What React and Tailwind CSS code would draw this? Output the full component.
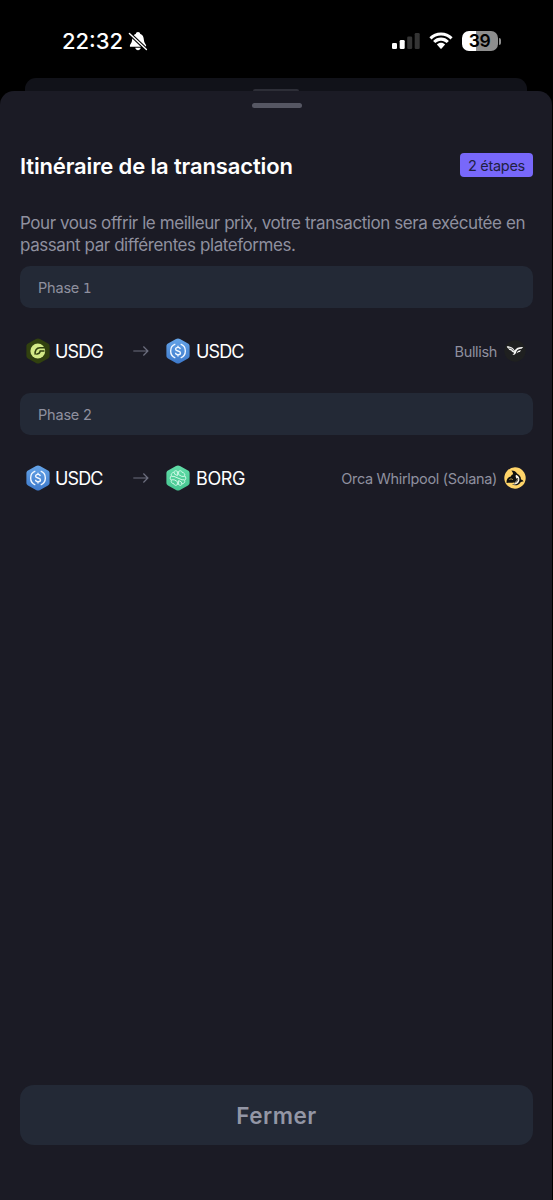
const hex = 'M12 .4 C12.8 .4 13.4 .7 14 1 L22 5.6 C23.2 6.3 23.6 7.1 23.6 8.4 V17.6 C23.6 18.9 23.2 19.7 22 20.4 L14 25 C12.7 25.8 11.3 25.8 10 25 L2 20.4 C.8 19.7 .4 18.9 .4 17.6 V8.4 C.4 7.1 .8 6.3 2 5.6 L10 1 C10.6 .7 11.2 .4 12 .4Z';

function UsdgIcon() {
  return (
    <svg className="h-[26px] w-6 shrink-0" viewBox="0 0 24 26">
      <path d={hex} fill="#31410f" />
      <circle cx="11.8" cy="13" r="7.4" fill="#d3ea86" />
      <path d="M20 9.8 H14 C10.4 9.9 8.6 12.6 9.2 16.6 M18.5 13.1 H14.2 C13.9 15 12.6 16 10.2 16.2" fill="none" stroke="#31410f" strokeWidth="1.5" />
    </svg>
  );
}

function UsdcIcon() {
  return (
    <svg className="h-[26px] w-6 shrink-0" viewBox="0 0 24 26">
      <defs>
        <linearGradient id="usdc" x1="0" y1="0" x2="0" y2="1">
          <stop offset="0" stopColor="#65a4e8" />
          <stop offset="1" stopColor="#3d79cb" />
        </linearGradient>
      </defs>
      <path d={hex} fill="url(#usdc)" />
      <g fill="none" stroke="#f1f7ff" strokeWidth="1.4">
        <path d="M9.3 6.2 A7.3 7.3 0 0 0 9.3 19.8 M14.7 6.2 A7.3 7.3 0 0 1 14.7 19.8" />
        <path d="M14.3 11.1 C14.1 9.8 13.2 9.4 12 9.4 C10.6 9.4 9.6 10.1 9.6 11.2 C9.6 13.7 14.5 12.2 14.5 14.9 C14.5 16 13.4 16.7 12 16.7 C10.6 16.7 9.6 16 9.5 14.8 M12 7.7 V9.5 M12 16.6 V18.4" />
      </g>
    </svg>
  );
}

function BorgIcon() {
  return (
    <svg className="h-[26px] w-6 shrink-0" viewBox="0 0 24 26">
      <defs>
        <linearGradient id="borg" x1="0" y1="0" x2="0" y2="1">
          <stop offset="0" stopColor="#62dda8" />
          <stop offset="1" stopColor="#45c590" />
        </linearGradient>
      </defs>
      <path d={hex} fill="url(#borg)" />
      <g fill="none" stroke="#d5fbe9" strokeWidth=".95" strokeLinecap="round" strokeLinejoin="round">
        <path d="M11.4 6.8 C10.6 5 8.2 5.5 7.8 7.4 C5.5 7.8 4.8 9.4 5.4 10.8 C3.7 12 3.8 14.4 5.3 15.3 C4.8 17.2 6 18.6 7.8 18.7 C8.3 20.6 10.6 21 11.4 19.3" />
        <path d="M12.6 6.8 C13.4 5 15.8 5.5 16.2 7.4 C18.5 7.8 19.2 9.4 18.6 10.8 C20.3 12 20.2 14.4 18.7 15.3 C19.2 17.2 18 18.6 16.2 18.7 C15.7 20.6 13.4 21 12.6 19.3" />
        <path d="M12.6 6.8 V9.6 L15.8 11.4 H18.3 M11.4 6.8 V10.6 L8.6 9.2 V7.8 M12.6 19.3 V15.5 L15.4 17 V18.4 M11.4 19.3 V16.6 L8.2 14.8 H5.6 M5.8 11.4 H8 L16 14.8 H18.3" />
      </g>
    </svg>
  );
}

function BullishIcon() {
  return (
    <svg className="size-[22px] shrink-0" viewBox="0 0 22 22">
      <circle cx="11" cy="11" r="10.7" fill="#1f2020" />
      <path d="M2.8 6.2 C6.6 6.2 9.2 7.4 10.6 10.6 C12.2 7.8 15 6.8 19.2 7 L17.6 8.8 C15 8.7 13.3 9.6 12.4 11.6 C11.9 14 10.6 15.4 8.4 15 C9.6 14.5 10.1 13.6 9.8 12.4 C8.6 12.3 7.6 11.7 7.2 10.6 C5.8 10.3 4.9 9.7 4.6 8.7 C3.6 8.2 3 7.2 2.8 6.2Z" fill="#f5f5f3" />
      <path d="M4.6 8.1 C7.2 8.3 8.8 9.2 9.8 11.2" stroke="#1f2020" strokeWidth=".6" fill="none" />
      <path d="M12.6 13.4 C13.2 11.2 14.4 10.3 17 10.3 L15.9 12 C14.8 12 13.8 12.4 12.6 13.4Z" fill="#f5f5f3" />
    </svg>
  );
}

function OrcaIcon() {
  return (
    <svg className="size-[22px] shrink-0" viewBox="0 0 22 22">
      <circle cx="11" cy="11" r="10.7" fill="#ffd469" />
      <path d="M7.4 3.6 C10.2 3.6 12 4.8 13 6.6 C15.6 8 17 10 17 12.4 C18.4 12.6 19.3 13.4 19.6 14.6 C18.4 14.4 17.4 14.6 16.6 15.2 C15.2 18 11.6 19.2 8 17.6 C9.6 17.4 10.6 16.8 10.8 15.6 C7.6 15.8 5 15.4 2.6 16 C2.2 12.6 3.6 10.2 6.8 9.4 C7.2 8.2 8 7.6 9.2 7.2 C9 5.8 8.4 4.6 7.4 3.6Z" fill="#11110f" />
      <path d="M12 7.8 C14.6 9 15.8 11 15.3 13.4 C14.7 16.3 12 18 8.6 17.3 C10.6 17 11.6 16 11.6 14.6 C13 13.8 13.4 12.8 12.6 11.6 C11.8 10.4 11.2 9.2 12 7.8Z" fill="#fff8ea" />
      <path d="M13.6 11 C13.9 13 13.2 14.6 11.8 15.6" fill="none" stroke="#11110f" strokeWidth=".8" />
      <path d="M5.4 12.6 C6.6 11.6 8 11.8 9 12.8" fill="none" stroke="#ffd469" strokeWidth=".7" />
    </svg>
  );
}

function Arrow() {
  return (
    <svg className="h-3 w-4 shrink-0" viewBox="0 0 16 12" fill="none" stroke="#6d6f7f" strokeWidth="1.2">
      <path d="M.3 6 H14.6 M10.4 1.5 L14.9 6 L10.4 10.5" />
    </svg>
  );
}

function StatusBar() {
  return (
    <header className="flex h-[78px] items-start justify-between pt-[29px] pr-[52px] pl-[62px] text-white">
      <div className="flex h-6 items-center">
        <span className="w-[66px] text-[22px] font-medium whitespace-nowrap">22:32</span>
        <svg className="h-[20px] w-[20px]" viewBox="0 0 20 20">
          <path d="M10 1 C11.4 1 12 1.8 12.1 2.7 C14.8 3.6 15.8 6 15.9 9 C16 12 18.2 13.2 18.2 14.9 C18.2 15.5 17.8 15.8 17.2 15.8 H2.8 C2.2 15.8 1.8 15.5 1.8 14.9 C1.8 13.2 4 12 4.1 9 C4.2 6 5.2 3.6 7.9 2.7 C8 1.8 8.6 1 10 1Z M7.2 16.8 H12.8 C12.4 18.4 11.3 19.2 10 19.2 C8.7 19.2 7.6 18.4 7.2 16.8Z" fill="white" />
          <path d="M1 2 L18.6 18.8" stroke="black" strokeWidth="3.6" />
          <path d="M1.4 2.4 L18.4 18.6" stroke="white" strokeWidth="1.4" strokeLinecap="round" />
        </svg>
      </div>
      <div className="flex h-6 items-center">
        <svg className="h-[18px] w-7" viewBox="0 0 28 18">
          <rect x="0" y="11" width="5" height="6" rx="1.3" fill="white" />
          <rect x="7.7" y="8" width="5" height="9" rx="1.3" fill="white" />
          <rect x="15.2" y="4.5" width="5" height="12.5" rx="1.3" fill="#343434" />
          <rect x="22.7" y="1" width="5" height="16" rx="1.3" fill="#343434" />
        </svg>
        <svg className="ml-[9px] h-[18px] w-6" viewBox="0 0 24 18">
          <path d="M12 .5 C16.6 .5 20.6 2.2 23.6 5.2 L21.5 7.4 C18.9 4.9 15.7 3.5 12 3.5 S5.1 4.9 2.5 7.4 L.4 5.2 C3.4 2.2 7.4 .5 12 .5Z M12 5.6 C15 5.6 17.8 6.8 19.9 8.9 L17.7 11.1 C16.1 9.6 14.2 8.7 12 8.7 S7.9 9.6 6.3 11.1 L4.1 8.9 C6.2 6.8 9 5.6 12 5.6Z M12 10.8 C13.6 10.8 15 11.4 16.1 12.5 L12.6 16.4 C12.2 16.8 11.8 16.8 11.4 16.4 L7.9 12.5 C9 11.4 10.4 10.8 12 10.8Z" fill="white" />
        </svg>
        <div className="ml-[9px] flex h-5 w-[36px] items-center justify-center rounded-[7px] bg-linear-to-r from-white from-40% to-[#8e8e8e] to-40%">
          <span className="text-[17.5px] leading-none font-semibold tracking-[-0.5px] text-black">39</span>
        </div>
        <div className="ml-[1px] h-[7px] w-[2.5px] rounded-r-full bg-[#8e8e8e]" />
      </div>
    </header>
  );
}

function Phase({ children }) {
  return (
    <div className="flex h-[42px] items-center rounded-[10px] bg-[#232936] px-[18px] pt-[2px] text-[14.5px] tracking-[-0.2px] whitespace-pre text-[#8f909f]">
      {children}
    </div>
  );
}

function Swap({ from, FromIcon, to, ToIcon, toClass, venue, VenueIcon }) {
  return (
    <div className="flex h-[85px] items-center pr-[7px] pl-[6px] text-[18px] text-white">
      <div className="flex w-[107px] items-center gap-[5px]">
        <FromIcon />
        <span className="pt-px tracking-[-0.9px]">{from}</span>
      </div>
      <Arrow />
      <div className="ml-[17px] flex items-center gap-[6px]">
        <ToIcon />
        <span className={`pt-px ${toClass}`}>{to}</span>
      </div>
      <div className="ml-auto flex items-center gap-[7px]">
        <span className="pt-[2px] text-[14.5px] tracking-[-0.33px] text-[#8f909f]">{venue}</span>
        <VenueIcon />
      </div>
    </div>
  );
}

export default function App() {
  return (
    <div className="flex h-[1200px] w-[553px] flex-col overflow-hidden bg-black font-['Inter',sans-serif]">
      <StatusBar />
      <div className="mr-[26px] ml-[25px] flex h-[13px] shrink-0 flex-col items-center justify-end rounded-t-[11px] bg-[#111219]">
        <div className="h-[2px] w-[46px] rounded-t-full bg-[#2d2e37]" />
      </div>
      <main className="mr-px flex min-h-0 flex-1 flex-col rounded-t-[14px] bg-[#1b1b25] pt-3 pr-[19px] pl-5">
        <div className="h-[5px] w-[50px] shrink-0 self-center rounded-full bg-[#565763]" />
        <div className="mt-[45px] flex h-6 items-center justify-between">
          <h1 className="pt-[2px] text-[22px] font-semibold tracking-[-0.14px] whitespace-nowrap text-white">Itinéraire de la transaction</h1>
          <span className="flex h-6 w-[73px] items-center justify-center rounded-[4px] bg-[#7868fa] pt-px text-[14.5px] tracking-[-0.3px] whitespace-nowrap text-[#211f42]">2 étapes</span>
        </div>
        <p className="mt-[35px] text-[17px] leading-[22px] tracking-[-0.43px] whitespace-nowrap text-[#8f909f]">
          Pour vous offrir le meilleur prix, votre transaction sera exécutée en
          <br />
          passant par différentes plateformes.
        </p>
        <section className="mt-[10px]">
          <Phase>Phase <span className="font-['DejaVu_Sans',sans-serif] text-[13.5px]">1</span></Phase>
          <Swap from="USDG" FromIcon={UsdgIcon} to="USDC" ToIcon={UsdcIcon} toClass="tracking-[-0.9px]" venue="Bullish" VenueIcon={BullishIcon} />
          <Phase>Phase 2</Phase>
          <Swap from="USDC" FromIcon={UsdcIcon} to="BORG" ToIcon={BorgIcon} toClass="tracking-[-0.4px]" venue="Orca Whirlpool (Solana)" VenueIcon={OrcaIcon} />
        </section>
        <button className="mt-auto mb-[55px] h-[60px] shrink-0 rounded-[14px] bg-[#232936] pt-[2px] text-[22.5px] font-semibold tracking-[0.5px] text-[#9396a5]">Fermer</button>
      </main>
    </div>
  );
}
